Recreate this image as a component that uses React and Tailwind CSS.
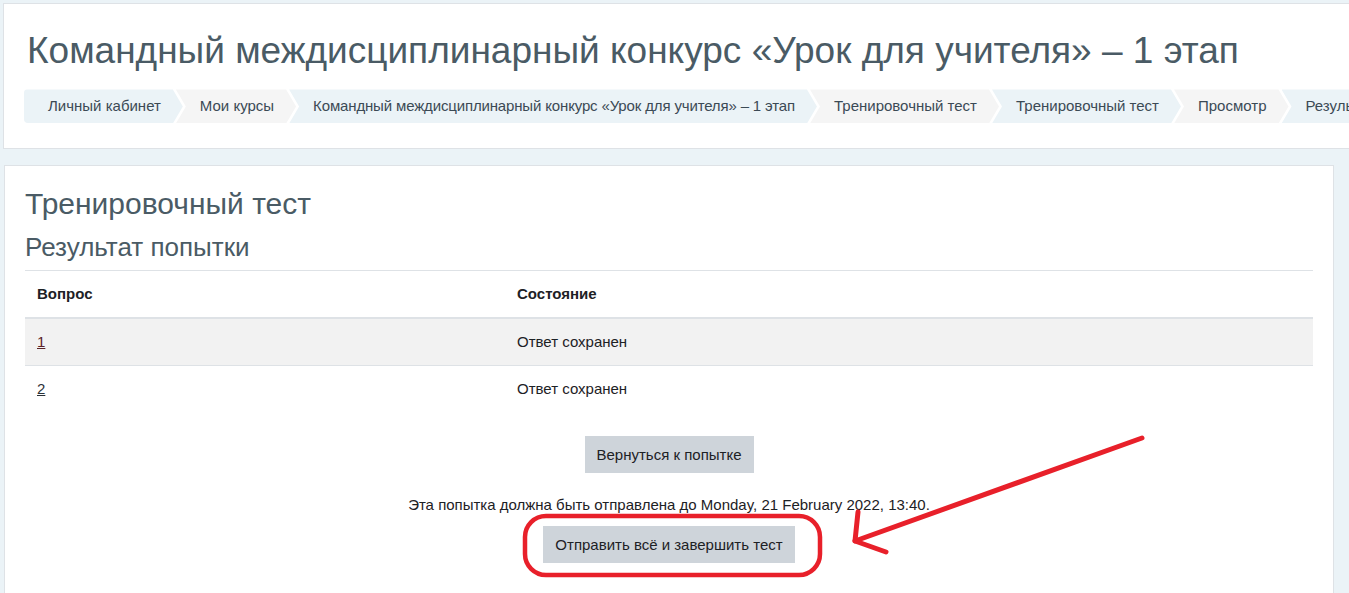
const crumbs = [
  'Личный кабинет',
  'Мои курсы',
  'Командный междисциплинарный конкурс «Урок для учителя» – 1 этап',
  'Тренировочный тест',
  'Тренировочный тест',
  'Просмотр',
  'Результат попытки',
];

const rows = [
  { n: '1', state: 'Ответ сохранен', shaded: true, linkClass: 'text-[#5a2328]' },
  { n: '2', state: 'Ответ сохранен', shaded: false, linkClass: 'text-[#2b3238]' },
];

function Breadcrumb() {
  return (
    <nav className="flex flex-nowrap h-[34px] text-[15px] text-[#3b4a55]">
      {crumbs.map((c, i) => (
        <div
          key={i}
          className={
            (i % 2 === 0 ? 'bg-[#ebf3f7] ' : 'bg-[#f5f5f5] ') +
            (i === 0
              ? 'rounded-l-[4px] pl-[24px] [clip-path:polygon(0_0,calc(100%-10px)_0,100%_50%,calc(100%-10px)_100%,0_100%)] '
              : '-ml-[7px] pl-[24px] [clip-path:polygon(0_0,calc(100%-10px)_0,100%_50%,calc(100%-10px)_100%,0_100%,10px_50%)] ') +
            (i === 2 ? 'tracking-[-0.15px] ' : '') +
            'flex items-center pr-[22px] whitespace-nowrap shrink-0'
          }
        >
          {c}
        </div>
      ))}
    </nav>
  );
}

function Annotation() {
  return (
    <svg
      className="absolute left-0 top-0 pointer-events-none"
      width="1349"
      height="593"
      viewBox="0 0 1349 593"
      fill="none"
    >
      <rect x="525" y="516" width="295" height="59" rx="21" stroke="#e8202a" strokeWidth="4.5" />
      <g stroke="#e8202a" strokeWidth="5" strokeLinecap="round" strokeLinejoin="round">
        <path d="M1142 438 L855 541" />
        <path d="M858 512 L855 541 L886 552" />
      </g>
    </svg>
  );
}

export default function App() {
  return (
    <div className="relative w-[1349px] h-[593px] overflow-hidden bg-[#ebf3f7] font-['Liberation_Sans',Arial,sans-serif] text-[#1d2125]">
      <div className="pt-[3px] pl-[3px]">
        {/* header */}
        <header className="bg-white border border-[#dee2e6] -mr-[40px] pt-[25px] pb-[25px] px-[20px] overflow-hidden">
          <h1 className="ml-[3px] text-[37px] leading-[1.2] text-[#4a5b65] whitespace-nowrap">
            Командный междисциплинарный конкурс «Урок для учителя» – 1 этап
          </h1>
          <div className="mt-[16px]">
            <Breadcrumb />
          </div>
        </header>

        {/* main card */}
        <main className="mt-[16px] ml-[1px] mr-[15px] bg-white border border-[#dee2e6] px-[20px] pt-[20px] pb-[40px]">
          <h2 className="text-[30px] leading-[1.2] text-[#4a5b65]">Тренировочный тест</h2>
          <h3 className="mt-[10px] text-[26px] leading-[1.2] text-[#4a5b65]">Результат попытки</h3>

          <table className="mt-[6px] w-full text-[15px] leading-[22px] border-collapse">
            <thead>
              <tr className="border-t border-[#dee2e6] border-b-2">
                <th className="w-[480px] text-left font-bold px-[12px] py-[12px]">Вопрос</th>
                <th className="text-left font-bold px-[12px] py-[12px]">Состояние</th>
              </tr>
            </thead>
            <tbody>
              {rows.map((r) => (
                <tr
                  key={r.n}
                  className={(r.shaded ? 'bg-[#f2f2f2] ' : 'border-t border-[#dee2e6] ') + 'align-middle'}
                >
                  <td className="px-[12px] py-[12px]">
                    <a href="#" className={'underline ' + r.linkClass}>
                      {r.n}
                    </a>
                  </td>
                  <td className="px-[12px] py-[12px]">{r.state}</td>
                </tr>
              ))}
            </tbody>
          </table>

          <div className="flex flex-col items-center">
            <button className="mt-[24px] bg-[#ced4da] px-[12px] py-[8px] text-[15px] leading-[21px] text-[#1d2125]">
              Вернуться к попытке
            </button>
            <p className="mt-[21px] text-[15px] leading-[21px] text-[#1d2125]">
              Эта попытка должна быть отправлена до Monday, 21 February 2022, 13:40.
            </p>
            <button className="mt-[11px] bg-[#ced4da] px-[12px] py-[8px] text-[15px] leading-[21px] text-[#1d2125]">
              Отправить всё и завершить тест
            </button>
          </div>
        </main>
      </div>
      <Annotation />
    </div>
  );
}
